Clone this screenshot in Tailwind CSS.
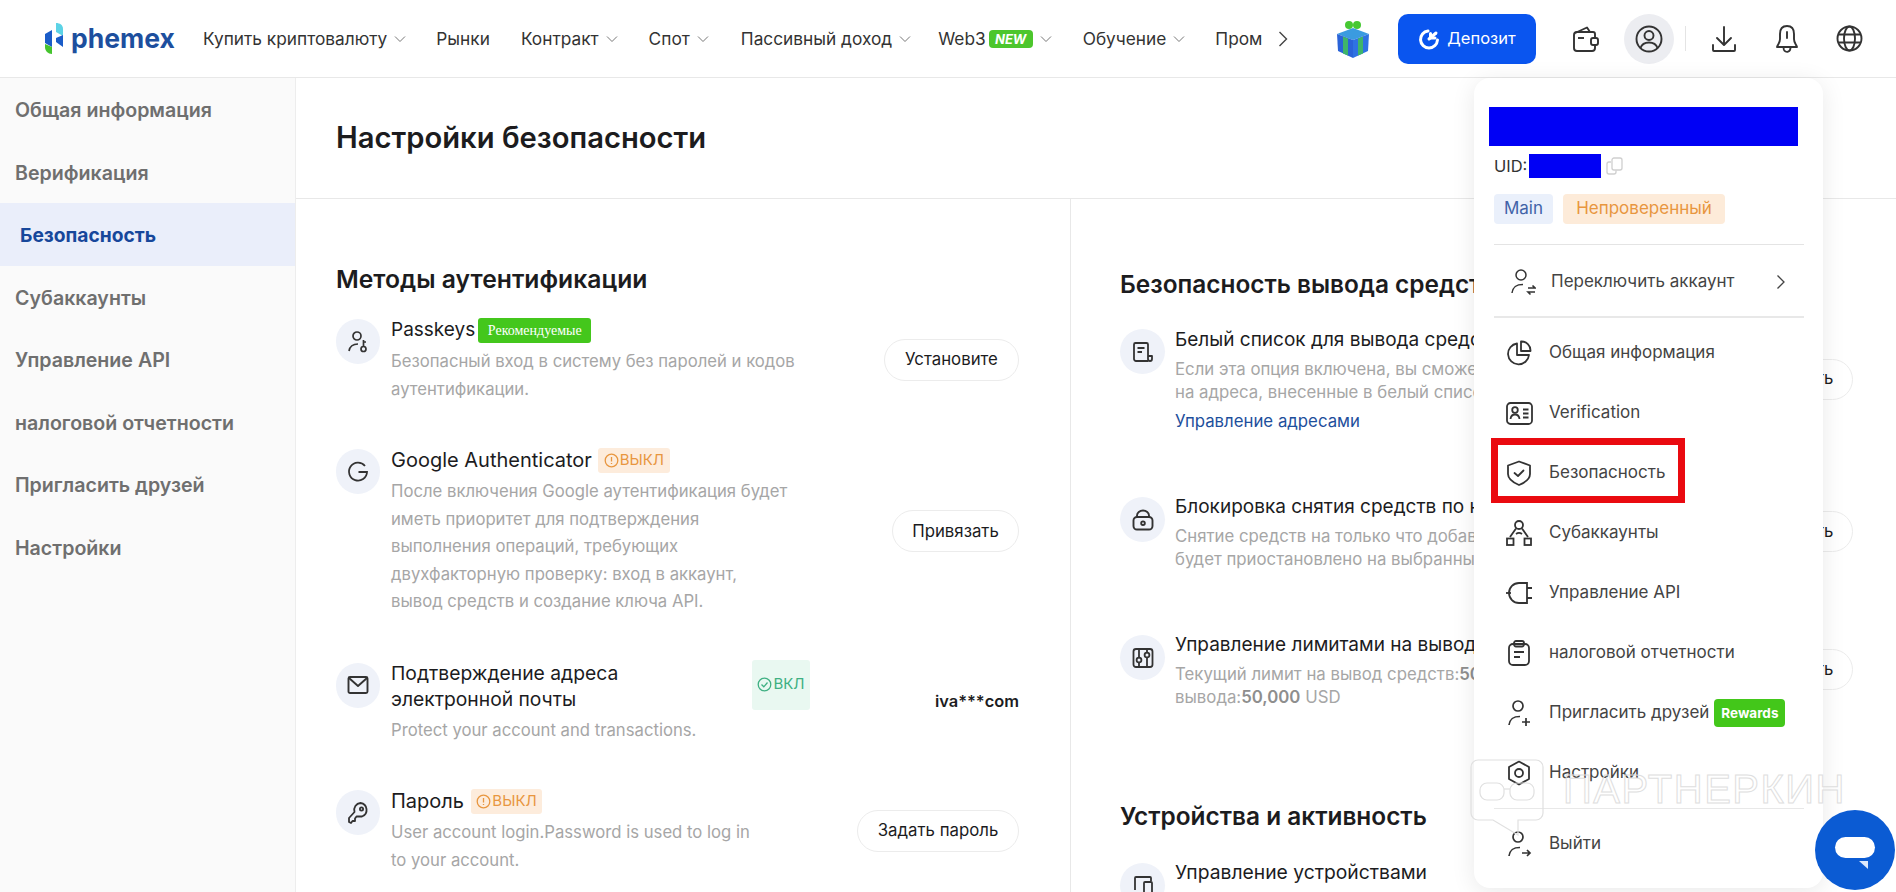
<!DOCTYPE html>
<html lang="ru">
<head>
<meta charset="utf-8">
<title>Настройки безопасности | Phemex</title>
<script src="https://cdn.jsdelivr.net/npm/@tailwindcss/browser@4"></script>
</head>
<body class="font-[Inter,sans-serif] bg-white text-[#1c1c1e] overflow-hidden">
<div class="relative w-[1896px] h-[892px] overflow-hidden">

    <!-- Шапка -->
    <header class="h-[78px] border-b border-[#e8e8e8] flex items-center text-[17.3px] text-[#333]">
        <div class="ml-[45px] flex items-center w-[158px] shrink-0">
            <svg width="24" height="32" viewBox="0 0 24 32">
                <path d="M0 11 L7 7 V24 L0 20 Z" fill="#1a5cc8"/>
                <path d="M0 21 L7 24 V31 C3 31 0 28 0 24 Z" fill="#45c42e"/>
                <path d="M11 0 C15 0 18 2 18 6 V13 L11 9 Z" fill="#5cd3e6"/>
                <path d="M18 12 V24 L11 19 V15 Z" fill="#1a5cc8"/>
            </svg>
            <span class="ml-[2px] text-[26.5px] font-bold text-[#1d4f9e] leading-none">phemex</span>
        </div>
        <nav class="flex items-center">
            <a class="flex items-center">Купить криптовалюту<svg class="ml-[7px]" width="12" height="8" viewBox="0 0 12 8" fill="none" stroke="#777"><path d="M1 1.5 L6 6.5 L11 1.5"/></svg></a>
            <a class="ml-[30px]">Рынки</a>
            <a class="ml-[31px] flex items-center">Контракт<svg class="ml-[7px]" width="12" height="8" viewBox="0 0 12 8" fill="none" stroke="#777"><path d="M1 1.5 L6 6.5 L11 1.5"/></svg></a>
            <a class="ml-[31px] flex items-center">Спот<svg class="ml-[7px]" width="12" height="8" viewBox="0 0 12 8" fill="none" stroke="#777"><path d="M1 1.5 L6 6.5 L11 1.5"/></svg></a>
            <a class="ml-[32px] flex items-center">Пассивный доход<svg class="ml-[7px]" width="12" height="8" viewBox="0 0 12 8" fill="none" stroke="#777"><path d="M1 1.5 L6 6.5 L11 1.5"/></svg></a>
            <a class="ml-[27px] flex items-center">Web3<span class="ml-[3px] w-[44px] h-[18px] rounded-[4px] bg-[#4cc62c] text-white text-[13px] font-bold italic leading-[18px] text-center">NEW</span><svg class="ml-[7px]" width="12" height="8" viewBox="0 0 12 8" fill="none" stroke="#777"><path d="M1 1.5 L6 6.5 L11 1.5"/></svg></a>
            <a class="ml-[31px] flex items-center">Обучение<svg class="ml-[7px]" width="12" height="8" viewBox="0 0 12 8" fill="none" stroke="#777"><path d="M1 1.5 L6 6.5 L11 1.5"/></svg></a>
            <a class="ml-[30px]">Пром</a>
            <svg class="ml-[16px]" width="10" height="16" viewBox="0 0 10 16" fill="none" stroke="#444" stroke-width="1.4"><path d="M1.5 1 L8.5 8 L1.5 15"/></svg>
        </nav>
        <div class="ml-auto flex items-center pr-[33px]">
            <svg width="36" height="38" viewBox="0 0 36 38">
                <circle cx="14" cy="5" r="4" fill="#46c832"/><circle cx="22" cy="5" r="4" fill="#46c832"/>
                <path d="M18 8 L34 14 L18 20 L2 14 Z" fill="#3a9be0"/>
                <path d="M2 14 L18 20 V38 L3 31 Z" fill="#2a63d8"/>
                <path d="M34 14 L18 20 V38 L33 31 Z" fill="#2f72e2"/>
                <path d="M8 16.5 L13 18.5 V35.5 L8 33.5 Z" fill="#3fb56a"/>
                <path d="M28 16.5 L23 18.5 V35.5 L28 33.5 Z" fill="#3fb56a"/>
            </svg>
            <button class="ml-[27px] w-[138px] h-[50px] rounded-[10px] bg-[#0a55ef] text-white flex items-center justify-center gap-[7px] text-[16.5px]">
                <svg width="22" height="22" viewBox="0 0 22 22" fill="none" stroke="#fff" stroke-width="3" stroke-linecap="round"><path d="M10 3 A8.5 8.5 0 1 0 19.5 12"/><path d="M11 11 L18 5"/><path d="M12.5 5.5 V10 H17"/></svg>
                Депозит
            </button>
            <svg class="ml-[35px]" width="28" height="28" viewBox="0 0 28 28" fill="none" stroke="#333" stroke-width="1.9" stroke-linejoin="round"><path d="M3 10 V23 A3 3 0 0 0 6 26 H21 A3 3 0 0 0 24 23 V21"/><path d="M3 10 A3 3 0 0 1 6 7 H22 A2 2 0 0 1 24 9 V13"/><path d="M4 8 L16 2.5 L19 7"/><path d="M7 13 H13"/><rect x="20" y="13" width="7" height="7" rx="2"/></svg>
            <div class="ml-[25px] w-[50px] h-[50px] rounded-full bg-[#ecedf1] flex items-center justify-center">
                <svg width="30" height="30" viewBox="0 0 30 30" fill="none" stroke="#333" stroke-width="1.9"><circle cx="15" cy="15" r="12.5"/><circle cx="15" cy="11.5" r="4.5"/><path d="M6.5 24 C8 19.5 11 18.5 15 18.5 C19 18.5 22 19.5 23.5 24"/></svg>
            </div>
            <span class="ml-[11px] w-px h-[25px] bg-[#e4e4e4]"></span>
            <svg class="ml-[25px]" width="26" height="28" viewBox="0 0 26 28" fill="none" stroke="#333" stroke-width="1.9" stroke-linecap="round" stroke-linejoin="round"><path d="M13 2 V19"/><path d="M6 13 L13 20 L20 13"/><path d="M2 20 V25 A1 1 0 0 0 3 26 H23 A1 1 0 0 0 24 25 V20"/></svg>
            <svg class="ml-[37px]" width="26" height="30" viewBox="0 0 26 30" fill="none" stroke="#333" stroke-width="1.9" stroke-linejoin="round"><path d="M13 2 C7.5 2 6 6 6 10 V15 C6 19 4 20 3 23 H23 C22 20 20 19 20 15 V10 C20 6 18.5 2 13 2 Z"/><path d="M10 23 A3 3 0 0 0 16 26 A3 3 0 0 0 16 23"/><path d="M13 8 V14" stroke-linecap="round"/></svg>
            <svg class="ml-[36px]" width="27" height="27" viewBox="0 0 27 27" fill="none" stroke="#333" stroke-width="1.9"><circle cx="13.5" cy="13.5" r="12"/><ellipse cx="13.5" cy="13.5" rx="5.5" ry="12"/><path d="M2.5 9.5 H24.5 M2.5 17.5 H24.5"/></svg>
        </div>
    </header>

    <div class="flex h-[814px]">
        <!-- Боковое меню -->
        <aside class="w-[296px] shrink-0 bg-[#fafafa] border-r border-[#ededed] text-[19.6px] font-semibold text-[#6f6f6f]">
            <a class="flex items-center h-[62.5px] pt-[3px] pl-[15px]">Общая информация</a>
            <a class="flex items-center h-[62.5px] pt-[3px] pl-[15px]">Верификация</a>
            <a class="flex items-center h-[62.5px] pt-[3px] pl-[20px] bg-[#eaeefa] text-[#17479b] font-bold text-[19.2px]">Безопасность</a>
            <a class="flex items-center h-[62.5px] pt-[3px] pl-[15px]">Субаккаунты</a>
            <a class="flex items-center h-[62.5px] pt-[3px] pl-[15px]">Управление API</a>
            <a class="flex items-center h-[62.5px] pt-[3px] pl-[15px]">налоговой отчетности</a>
            <a class="flex items-center h-[62.5px] pt-[3px] pl-[15px]">Пригласить друзей</a>
            <a class="flex items-center h-[62.5px] pt-[3px] pl-[15px]">Настройки</a>
        </aside>

        <main class="flex-1 min-w-0">
            <div class="h-[121px] border-b border-[#e8e8e8] pl-[40px] flex items-center">
                <h1 class="text-[29.2px] font-semibold text-[#1c1c1e]">Настройки безопасности</h1>
            </div>
            <div class="flex h-[693px] overflow-hidden">

                <!-- Методы аутентификации -->
                <section class="w-[775px] shrink-0 border-r border-[#e8e8e8] pl-[40px] pr-[51px] pt-[64px]">
                    <h2 class="text-[24.7px] leading-[32px] font-semibold">Методы аутентификации</h2>
                    <div class="mt-[22px] flex flex-col gap-[44px]">

                        <div class="flex items-center justify-between">
                            <div class="flex">
                                <div class="w-[44px] h-[45px] mt-[2px] rounded-full bg-[#eff2f9] flex items-center justify-center shrink-0">
                                    <svg width="22" height="24" viewBox="0 0 22 24" fill="none" stroke="#333" stroke-width="1.7"><circle cx="10" cy="6" r="4"/><path d="M2 21 C3 15.5 6 14 11 14"/><circle cx="16.5" cy="19" r="2.5"/><path d="M16.5 16.5 V10 M16.5 12 H19"/></svg>
                                </div>
                                <div class="ml-[11px]">
                                    <div class="flex items-center h-[26px]"><span class="text-[19px] leading-[26px]">Passkeys</span><span class="ml-[3px] w-[113px] h-[25px] rounded-[3px] bg-[#44c71c] text-white text-[14px] leading-[25px] text-center font-['Liberation_Serif',serif]">Рекомендуемые</span></div>
                                    <p class="mt-[5px] text-[16.7px] leading-[27.5px] text-[#a6a6a6]">Безопасный вход в систему без паролей и кодов<br>аутентификации.</p>
                                </div>
                            </div>
                            <button class="w-[135px] h-[42px] rounded-full border border-[#ececec] text-[16.8px]">Установите</button>
                        </div>

                        <div class="flex items-center justify-between">
                            <div class="flex">
                                <div class="w-[44px] h-[45px] mt-[2px] rounded-full bg-[#eff2f9] flex items-center justify-center shrink-0">
                                    <svg width="22" height="22" viewBox="0 0 22 22" fill="none" stroke="#333" stroke-width="1.8"><path d="M18 5 A9 9 0 1 0 20 11 H11.5"/></svg>
                                </div>
                                <div class="ml-[11px]">
                                    <div class="flex items-center h-[26px]"><span class="text-[20px] leading-[26px]">Google Authenticator</span><span class="ml-[6px] w-[72px] h-[25px] rounded-[3px] bg-[#fdecdc] text-[#e8963f] text-[15px] flex items-center justify-center gap-[1px]"><svg width="15" height="15" viewBox="0 0 15 15" fill="none" stroke="#e8963f" stroke-width="1.3"><circle cx="7.5" cy="7.5" r="6.3"/><path d="M7.5 4 V8.5 M7.5 10 V11"/></svg>ВЫКЛ</span></div>
                                    <p class="mt-[5px] text-[16.7px] leading-[27.5px] text-[#a6a6a6]">После включения Google аутентификация будет<br>иметь приоритет для подтверждения<br>выполнения операций, требующих<br>двухфакторную проверку: вход в аккаунт,<br>вывод средств и создание ключа API.</p>
                                </div>
                            </div>
                            <button class="w-[127px] h-[42px] rounded-full border border-[#ececec] text-[16.8px]">Привязать</button>
                        </div>

                        <div class="flex items-center justify-between">
                            <div class="flex">
                                <div class="w-[44px] h-[45px] mt-[3px] rounded-full bg-[#eff2f9] flex items-center justify-center shrink-0">
                                    <svg width="22" height="20" viewBox="0 0 22 20" fill="none" stroke="#333" stroke-width="1.9" stroke-linejoin="round"><rect x="1.5" y="2" width="19" height="16" rx="1.5"/><path d="M2 3 L11 11 L20 3"/></svg>
                                </div>
                                <div class="ml-[11px]">
                                    <div class="flex">
                                        <span class="w-[351px] text-[19.3px] leading-[26px]">Подтверждение адреса<br>электронной почты</span>
                                        <span class="ml-[10px] w-[58px] h-[50px] rounded-[3px] bg-[#e9f8f1] text-[#3fb083] text-[15px] flex items-center justify-center gap-[1px]"><svg width="15" height="15" viewBox="0 0 15 15" fill="none" stroke="#3fb083" stroke-width="1.3"><circle cx="7.5" cy="7.5" r="6.3"/><path d="M4.5 7.5 L6.8 9.8 L10.5 5.5"/></svg>ВКЛ</span>
                                    </div>
                                    <p class="mt-[5px] text-[16.7px] leading-[27.5px] text-[#a6a6a6]">Protect your account and transactions.</p>
                                </div>
                            </div>
                            <span class="text-[16.4px] font-semibold">iva***com</span>
                        </div>

                        <div class="flex items-center justify-between">
                            <div class="flex">
                                <div class="w-[44px] h-[45px] mt-[2px] rounded-full bg-[#eff2f9] flex items-center justify-center shrink-0">
                                    <svg width="22" height="24" viewBox="0 0 22 24" fill="none" stroke="#333" stroke-width="1.8" stroke-linejoin="round"><path d="M13.5 2 A7 7 0 0 1 15 15.5 L9.5 15.5 L8 17.5 L8 20 L5.5 20 L4 22 L2 21 L2 17 L7.5 11 A7 7 0 0 1 13.5 2 Z"/><circle cx="14.5" cy="8" r="1.6"/></svg>
                                </div>
                                <div class="ml-[11px]">
                                    <div class="flex items-center h-[26px]"><span class="text-[20px] leading-[26px]">Пароль</span><span class="ml-[7px] w-[71px] h-[25px] rounded-[3px] bg-[#fdecdc] text-[#e8963f] text-[15px] flex items-center justify-center gap-[1px]"><svg width="15" height="15" viewBox="0 0 15 15" fill="none" stroke="#e8963f" stroke-width="1.3"><circle cx="7.5" cy="7.5" r="6.3"/><path d="M7.5 4 V8.5 M7.5 10 V11"/></svg>ВЫКЛ</span></div>
                                    <p class="mt-[5px] text-[16.7px] leading-[27.5px] text-[#a6a6a6]">User account login.Password is used to log in<br>to your account.</p>
                                </div>
                            </div>
                            <button class="w-[162px] h-[42px] rounded-full border border-[#ececec] text-[16.8px]">Задать пароль</button>
                        </div>
                    </div>
                </section>

                <!-- Безопасность вывода средств -->
                <section class="flex-1 min-w-0 pl-[49px] pr-[43px] pt-[69px]">
                    <h2 class="text-[24.4px] leading-[32px] font-semibold whitespace-nowrap">Безопасность вывода средств</h2>

                    <div class="mt-[28px] flex items-center justify-between">
                        <div class="flex">
                            <div class="w-[45px] h-[45px] mt-[1px] rounded-full bg-[#eff2f9] flex items-center justify-center shrink-0">
                                <svg width="22" height="22" viewBox="0 0 22 22" fill="none" stroke="#333" stroke-width="1.8" stroke-linejoin="round"><path d="M16 20 H4 A2 2 0 0 1 2 18 V3.5 A1.5 1.5 0 0 1 3.5 2 H14.5 A1.5 1.5 0 0 1 16 3.5 V18 A2 2 0 0 0 20 18 V15 H16"/><path d="M5.5 7 H12.5 M5.5 11 H10"/></svg>
                            </div>
                            <div class="ml-[10px]">
                                <div class="text-[19px] leading-[24px] whitespace-nowrap">Белый список для вывода средств</div>
                                <p class="mt-[6px] text-[16.8px] leading-[23px] text-[#a6a6a6] whitespace-nowrap">Если эта опция включена, вы сможете выводить средства только<br>на адреса, внесенные в белый список</p>
                                <a class="block mt-[5px] text-[16.8px] leading-[24px] text-[#1e4f9c]">Управление адресами</a>
                            </div>
                        </div>
                        <button class="shrink-0 w-[132px] h-[41px] -mt-[3px] rounded-full border border-[#ececec] text-[16.8px]">Установить</button>
                    </div>

                    <div class="mt-[62px] flex items-center justify-between">
                        <div class="flex">
                            <div class="w-[45px] h-[45px] mt-[2px] rounded-full bg-[#eff2f9] flex items-center justify-center shrink-0">
                                <svg width="22" height="22" viewBox="0 0 22 22" fill="none" stroke="#333" stroke-width="1.9"><rect x="1.5" y="8" width="19" height="12.5" rx="3.5"/><path d="M5 8 V6.5 A6 5 0 0 1 17 6.5 V8"/><circle cx="11" cy="14.2" r="1.8"/></svg>
                            </div>
                            <div class="ml-[10px]">
                                <div class="text-[19px] leading-[24px] whitespace-nowrap">Блокировка снятия средств по новому адресу</div>
                                <p class="mt-[6px] text-[16.8px] leading-[23px] text-[#a6a6a6] whitespace-nowrap">Снятие средств на только что добавленный адрес<br>будет приостановлено на выбранный период</p>
                            </div>
                        </div>
                        <button class="shrink-0 w-[132px] h-[41px] -mt-[3px] rounded-full border border-[#ececec] text-[16.8px]">Установить</button>
                    </div>

                    <div class="mt-[62px] flex items-center justify-between">
                        <div class="flex">
                            <div class="w-[45px] h-[45px] mt-[2px] rounded-full bg-[#eff2f9] flex items-center justify-center shrink-0">
                                <svg width="22" height="22" viewBox="0 0 22 22" fill="none" stroke="#333" stroke-width="1.8"><rect x="1.5" y="2" width="19" height="18" rx="2.5"/><path d="M7 2 V10 M7 16 V20 M15 2 V5 M15 11 V20"/><circle cx="7" cy="13" r="2.4"/><circle cx="15" cy="8" r="2.4"/></svg>
                            </div>
                            <div class="ml-[10px]">
                                <div class="text-[19px] leading-[24px] whitespace-nowrap">Управление лимитами на вывод средств</div>
                                <p class="mt-[6px] text-[16.8px] leading-[23px] text-[#a6a6a6] whitespace-nowrap">Текущий лимит на вывод средств:<b class="font-semibold text-[#8e8e8e]">50,000 USD</b>, суточный лимит<br>вывода:<b class="font-semibold text-[#8e8e8e]">50,000</b> USD</p>
                            </div>
                        </div>
                        <button class="shrink-0 w-[132px] h-[41px] -mt-[3px] rounded-full border border-[#ececec] text-[16.8px]">Установить</button>
                    </div>

                    <h2 class="mt-[91px] text-[24.4px] leading-[32px] font-semibold whitespace-nowrap">Устройства и активность</h2>
                    <div class="mt-[28px] flex">
                        <div class="w-[45px] h-[45px] mt-[3px] rounded-full bg-[#eff2f9] flex items-center justify-center shrink-0">
                            <svg width="22" height="22" viewBox="0 0 22 22" fill="none" stroke="#333" stroke-width="1.8"><path d="M3 15 V3 A1 1 0 0 1 4 2 H18 A1 1 0 0 1 19 3 V6"/><path d="M1 19 H11"/><rect x="12" y="7" width="8" height="13" rx="1"/></svg>
                        </div>
                        <div class="ml-[10px] text-[19.3px] leading-[24px]">Управление устройствами</div>
                    </div>
                </section>
            </div>
        </main>
    </div>

    <!-- Меню профиля -->
    <div class="absolute left-[1474px] top-[78px] w-[349px] h-[810px] bg-white rounded-[16px] shadow-[0_4px_24px_rgba(0,0,0,0.09)] pt-[29px] text-[17px] text-[#444]">
        <div class="ml-[15px] w-[309px] h-[39px] bg-[#0000f5]"></div>
        <div class="ml-[20px] mt-[8px] h-[24px] flex items-center">
            <span class="text-[#333] w-[35px] text-[16.5px]">UID:</span>
            <span class="w-[72px] h-[24px] bg-[#0000f5]"></span>
            <svg class="ml-[5px]" width="17" height="18" viewBox="0 0 17 18" fill="none" stroke="#cfcfcf" stroke-width="1.3"><rect x="6" y="1" width="10" height="12" rx="2"/><path d="M5 5 H3 A2 2 0 0 0 1 7 V15 A2 2 0 0 0 3 17 H8 A2 2 0 0 0 10 15 V13.5"/></svg>
        </div>
        <div class="ml-[20px] mt-[16px] flex gap-[10px]">
            <span class="w-[59px] h-[30px] rounded-[4px] bg-[#eaf0fb] text-[#4163a8] flex items-center justify-center">Main</span>
            <span class="w-[162px] h-[30px] rounded-[4px] bg-[#fdebd9] text-[#e8963f] flex items-center justify-center">Непроверенный</span>
        </div>
        <div class="ml-[20px] mr-[19px] mt-[20px] h-px bg-[#e4e4e4]"></div>
        <div class="mt-[7px] h-[60px] pl-[36px] flex items-center">
            <svg width="26" height="28" viewBox="0 0 26 28" fill="none" stroke="#333" stroke-width="1.5"><circle cx="11" cy="7" r="5"/><path d="M2 25 C3 18 7 16.5 13 16.5"/><path d="M18 20 H25 L22.5 17.5 M25 24 H18 L20.5 26.5" stroke-width="1.6"/></svg>
            <span class="ml-[15px]">Переключить аккаунт</span>
            <svg class="ml-[42px]" width="10" height="16" viewBox="0 0 10 16" fill="none" stroke="#444" stroke-width="1.3"><path d="M1.5 1.5 L8 8 L1.5 14.5"/></svg>
        </div>
        <div class="ml-[20px] mr-[19px] mt-[4px] h-[2px] bg-[#e8e8e8]"></div>

        <a class="mt-[5px] h-[60px] pl-[32px] flex items-center">
            <svg width="26" height="26" viewBox="0 0 26 26" fill="none" stroke="#333" stroke-width="1.8" stroke-linejoin="round"><path d="M11 3.5 A10.5 10.5 0 1 0 23 15 H11 Z"/><path d="M15 1.5 A9 9 0 0 1 24.5 11 H15 Z"/></svg>
            <span class="ml-[17px]">Общая информация</span>
        </a>
        <a class="h-[60px] pl-[32px] flex items-center">
            <svg width="27" height="23" viewBox="0 0 27 23" fill="none" stroke="#333" stroke-width="1.8"><rect x="1" y="1" width="25" height="21" rx="3.5"/><circle cx="9" cy="8" r="2.8"/><path d="M4.5 17 C5 13 7 12.5 9 12.5 C11 12.5 13 13 13.5 17"/><path d="M17 7.5 H22.5 M17 11.5 H22.5 M17 15.5 H22.5"/></svg>
            <span class="ml-[16px]">Verification</span>
        </a>
        <a class="relative h-[60px] pl-[32px] flex items-center">
            <svg width="26" height="26" viewBox="0 0 26 26" fill="none" stroke="#333" stroke-width="1.8" stroke-linejoin="round"><path d="M13 1.5 L24 5.5 V14 C24 19 19 22.5 13 25 C7 22.5 2 19 2 14 V5.5 Z"/><path d="M8.5 13 L12 16 L17.5 10.5" stroke-linecap="round"/></svg>
            <span class="ml-[17px]">Безопасность</span>
            <span class="absolute left-[17px] top-[-5px] w-[194px] h-[65px] border-[7px] border-[#ea0a10]"></span>
        </a>
        <a class="h-[60px] pl-[32px] flex items-center">
            <svg width="26" height="26" viewBox="0 0 26 26" fill="none" stroke="#333" stroke-width="1.8"><circle cx="13" cy="5" r="4"/><path d="M10 8.5 L4 17 M16 8.5 L22 17"/><rect x="1" y="18.5" width="6.5" height="6.5"/><rect x="18.5" y="18.5" width="6.5" height="6.5"/><path d="M10 14 A5 5 0 0 1 16 14"/></svg>
            <span class="ml-[17px]">Субаккаунты</span>
        </a>
        <a class="h-[60px] pl-[32px] flex items-center">
            <svg width="27" height="24" viewBox="0 0 27 24" fill="none" stroke="#333" stroke-width="1.8"><path d="M0 12 H5"/><path d="M21 2 H13 A10 10 0 0 0 13 22 H21 Z"/><path d="M21 7 H26 M21 17 H26"/></svg>
            <span class="ml-[16px]">Управление API</span>
        </a>
        <a class="h-[60px] pl-[32px] flex items-center">
            <svg width="26" height="26" viewBox="0 0 26 26" fill="none" stroke="#333" stroke-width="1.8"><rect x="3" y="4" width="20" height="21" rx="4"/><rect x="8" y="1" width="10" height="5.5" rx="2"/><path d="M8 12 H18 M8 17 H14"/></svg>
            <span class="ml-[17px]">налоговой отчетности</span>
        </a>
        <a class="h-[60px] pl-[32px] flex items-center">
            <svg width="26" height="28" viewBox="0 0 26 28" fill="none" stroke="#333" stroke-width="1.7"><circle cx="12" cy="7" r="5"/><path d="M3 26 C4 19 8 17.5 14 17.5"/><path d="M20 19 V27 M16 23 H24"/></svg>
            <span class="ml-[17px]">Пригласить друзей</span>
            <span class="ml-[5px] w-[71px] h-[28px] rounded-[4px] bg-[#43c71a] text-white text-[13.5px] font-bold flex items-center justify-center">Rewards</span>
        </a>
        <a class="h-[60px] pl-[32px] flex items-center">
            <svg width="26" height="26" viewBox="0 0 26 26" fill="none" stroke="#333" stroke-width="1.8" stroke-linejoin="round"><path d="M13 1.5 L23 7 V19 L13 24.5 L3 19 V7 Z"/><circle cx="13" cy="13" r="4"/></svg>
            <span class="ml-[17px]">Настройки</span>
        </a>
        <div class="ml-[20px] mr-[19px] mt-[5px] h-px bg-[#e8e8e8]"></div>
        <a class="mt-[5px] h-[60px] pl-[32px] flex items-center">
            <svg width="26" height="28" viewBox="0 0 26 28" fill="none" stroke="#333" stroke-width="1.7"><circle cx="12" cy="7" r="5"/><path d="M3 26 C4 19 8 17.5 14 17.5"/><path d="M16 23 H24 M21 20 L24 23 L21 26"/></svg>
            <span class="ml-[17px]">Выйти</span>
        </a>
    </div>

    <!-- Водяной знак -->
    <div class="absolute left-[1470px] top-[758px] flex items-center pointer-events-none">
        <svg width="74" height="78" viewBox="0 0 74 78" fill="none" stroke="#e0e0e0" stroke-width="1.2"><path d="M8 2 H66 A7 7 0 0 1 73 9 V55 A7 7 0 0 1 66 62 H48 V77 L23 62 H8 A7 7 0 0 1 1 55 V9 A7 7 0 0 1 8 2 Z"/><rect x="10" y="25" width="24" height="17" rx="7"/><rect x="40" y="25" width="24" height="17" rx="7"/><path d="M34 31 H40"/></svg>
        <span class="ml-[19px] -mt-[16px] text-[40px] leading-none tracking-[1.5px] font-['Liberation_Sans',sans-serif] text-transparent [-webkit-text-stroke:1px_#dedede]">ПАРТНЕРКИН</span>
    </div>

    <!-- Чат -->
    <div class="absolute left-[1815px] top-[810px] w-[80px] h-[80px] rounded-full bg-[#0b5bd3] flex items-center justify-center">
        <span class="relative w-[40px] h-[21px] rounded-full bg-white -mt-[6px]">
            <svg class="absolute left-[24px] top-[24px]" width="9" height="8" viewBox="0 0 9 8"><path d="M0 0 H9 V8 Z" fill="#dbe8fb"/></svg>
        </span>
    </div>
</div>
</body>
</html>
